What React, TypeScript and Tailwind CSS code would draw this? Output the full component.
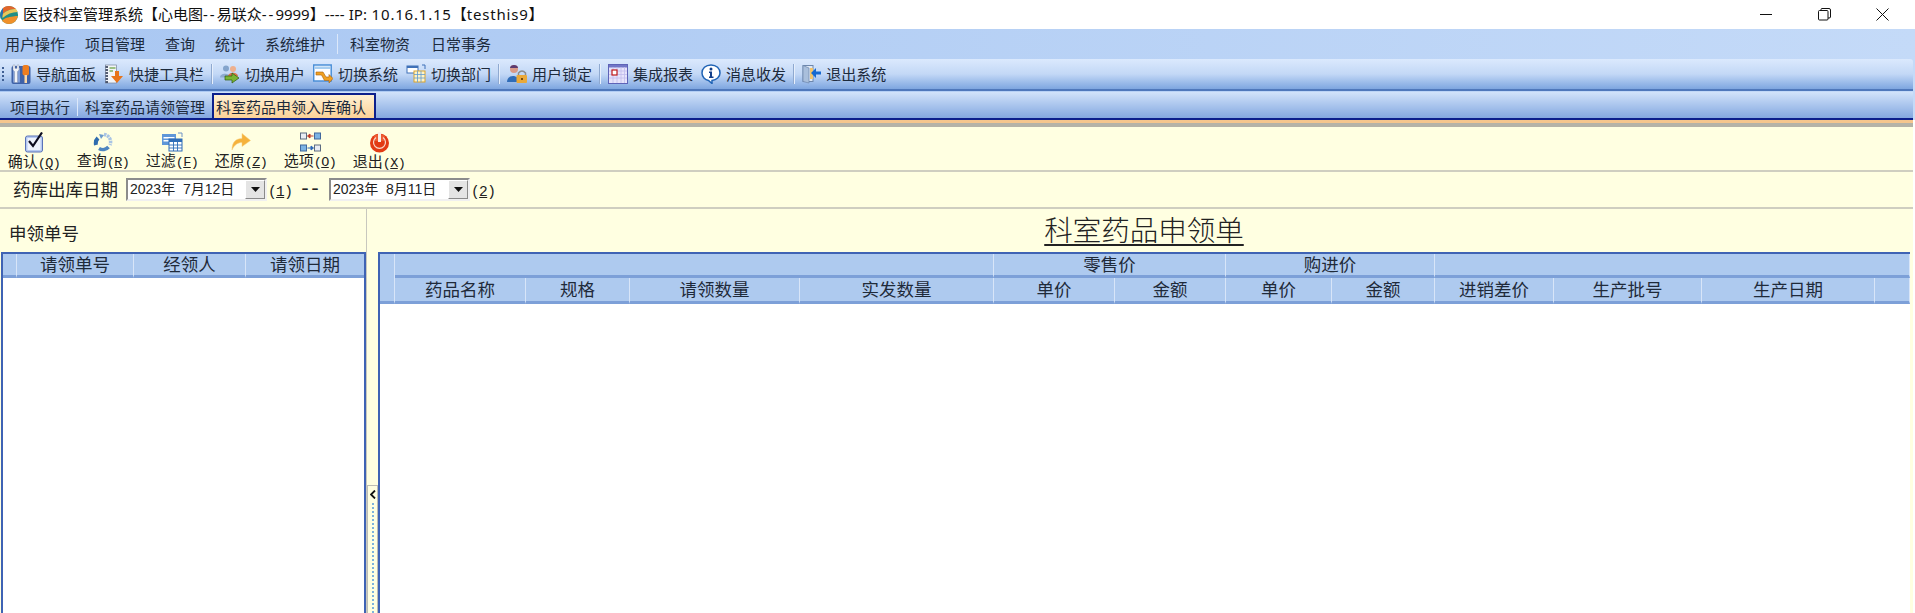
import type { ReactNode } from "react";

const cjk = { fontFamily: '"Noto Sans", "Noto Sans CJK SC", sans-serif' };

function Logo() {
  return (
    <svg width="18" height="20" viewBox="0 0 18 20">
      <circle cx="9" cy="10" r="9" fill="#1f8f86" />
      <path d="M3 3C5.500 .5 12 -.5 16 4C12 4 7 5 3 8.500Z" fill="#e2662a" />
      <path d="M2.500 9C7 5 12 4 16 4C16.800 5 17.300 6 17.600 7C12 7 7 9 2.500 13Z" fill="#e9c75a" />
      <path d="M.4 11C.5 7 1.500 5 3 3L3 8.500L.8 14Z" fill="#2a6fb0" />
      <path d="M2 15.500C6 12 12 11 17.800 11C17 16 13 19 9 19C6 19 3.500 17.500 2 15.500Z" fill="#f0902a" />
      <path d="M2 15.500C6 12 12 10 17.800 9.500L17.800 11C12 11 6 12 2 15.500Z" fill="#1f8f86" />
    </svg>
  );
}

function WindowButtons() {
  return (
    <div className="flex items-center gap-[45px] pr-[26px]">
      <svg width="13" height="13" viewBox="0 0 13 13"><path d="M0 6.500H12" stroke="#111" /></svg>
      <svg width="13" height="13" viewBox="0 0 13 13" fill="none" stroke="#111"><rect x=".5" y="2.500" width="9.500" height="9.500" rx="1" /><path d="M3 2.500V1.500Q3 .5 4 .5H11Q12.500 .5 12.500 2V9Q12.500 10 11 10H10" /></svg>
      <svg width="13" height="13" viewBox="0 0 13 13" stroke="#111"><path d="M.5 .5L12.500 12.500M12.500 .5L.5 12.500" /></svg>
    </div>
  );
}

function NavIcon() {
  return (
    <svg width="20" height="21" viewBox="0 0 20 21">
      <rect x=".5" y="2" width="19" height="18" rx="2" fill="#3f62a8" />
      <rect x="2" y="4" width="7" height="14.500" fill="#7d9bd6" />
      <path d="M2 1H4V4.500H6V1H8V6L6.500 7.500V18.500H3.500V7.500L2 6Z" fill="#f1f3f8" stroke="#77849c" strokeWidth=".4" />
      <rect x="11.500" y="1" width="6.500" height="10.500" rx="2" fill="#ee7d1e" />
      <rect x="13.500" y="11" width="2.500" height="8" fill="#fcd9a8" />
    </svg>
  );
}

function QuickIcon() {
  return (
    <svg width="20" height="20" viewBox="0 0 20 20">
      <rect x="1.500" y="1" width="11" height="18" fill="#f1f4f8" stroke="#76829a" strokeWidth=".7" />
      <path d="M1.500 3H4M1.500 6H4M1.500 9H4M1.500 12H4M1.500 15H4M1.500 18H4" stroke="#1f2b45" strokeWidth="1.500" />
      <path d="M5.500 4H11.500M5.500 7H9" stroke="#7fae5c" strokeWidth="1.500" />
      <path d="M11 7H15V12H19L13 19L7 12H11Z" fill="#e8741a" />
    </svg>
  );
}

function SwitchUserIcon() {
  return (
    <svg width="20" height="20" viewBox="0 0 20 20">
      <circle cx="6" cy="4.500" r="3" fill="#84a4cc" />
      <path d="M0 13.500C0 8.500 10 8.500 10 13.500Z" fill="#8daacf" />
      <circle cx="13" cy="5" r="3" fill="#eeb08e" />
      <path d="M8 12.500C8 7.500 18 7.500 18 12.500Z" fill="#d9764f" />
      <path d="M5 12H12V9L19 14L12 19V16H5Z" fill="#7ab534" stroke="#2f5a10" strokeWidth=".7" />
    </svg>
  );
}

function SwitchSystemIcon() {
  return (
    <svg width="20" height="20" viewBox="0 0 20 20">
      <rect x=".7" y="1" width="17.500" height="16" fill="#fdfdff" stroke="#4a8fd8" strokeWidth="1.500" />
      <rect x="2" y="2.500" width="15" height="2.500" fill="#a6cdf0" />
      <path d="M3 8H10L13 13H16V10.500L20 14.500L16 19V16.500H11.500L8.500 11H3Z" fill="#f0a021" stroke="#a8600c" strokeWidth=".6" />
    </svg>
  );
}

function SwitchDeptIcon() {
  return (
    <svg width="20" height="20" viewBox="0 0 20 20">
      <rect x="1" y="2" width="11" height="7" fill="#fff" stroke="#3f71b8" />
      <rect x="1" y="2" width="11" height="2" fill="#3f71b8" />
      <rect x="8" y="7" width="11" height="11" fill="#fdf3c8" stroke="#d9a32d" />
      <path d="M8 10.500H19M8 14H19M11.500 7V18M15 7V18" stroke="#5f9bd0" strokeWidth=".8" />
      <path d="M16 1H19V5" fill="none" stroke="#3f71b8" />
    </svg>
  );
}

function UserLockIcon() {
  return (
    <svg width="20" height="20" viewBox="0 0 20 20">
      <circle cx="7" cy="5" r="4" fill="#d99a88" />
      <path d="M3 4C3 0 11 0 11 4Z" fill="#5b3a70" />
      <path d="M0 18C0 10 12 10 12 18Z" fill="#2f6cb8" />
      <path d="M11.500 11V9Q15 5 18.500 9V11" fill="none" stroke="#8c8c8c" strokeWidth="1.500" />
      <rect x="9.500" y="11" width="10.500" height="8" rx="1" fill="#eaa93a" />
      <rect x="14" y="14" width="2" height="2" fill="#7a4a0c" />
    </svg>
  );
}

function ReportIcon() {
  return (
    <svg width="20" height="20" viewBox="0 0 20 20">
      <rect x=".5" y=".5" width="19" height="19" fill="#e6e3fb" stroke="#5e63b8" />
      <rect x="1" y="1" width="18" height="2.500" fill="#7176c7" />
      <path d="M1 7H19M1 10.500H19M1 14H19M5 3V19M9 3V19M13 3V19M16.500 3V19" stroke="#c0bdee" strokeWidth=".8" />
      <rect x="4" y="6" width="5" height="5" fill="#fff" stroke="#c01a1a" strokeWidth="1.200" />
    </svg>
  );
}

function InfoIcon() {
  return (
    <svg width="20" height="20" viewBox="0 0 20 20">
      <path d="M10 1C4.500 1 1 4.500 1 9C1 13 4 16 7.500 16.500L11 19.500V16.500C15.500 16 19 13 19 9C19 4.500 15.500 1 10 1Z" fill="#fff" stroke="#1f63b5" strokeWidth="1.500" />
      <circle cx="10" cy="5" r="1.500" fill="#123f8a" />
      <path d="M8 7.500H11V12.500H12.500V14H8V12.500H9V9H8Z" fill="#123f8a" />
    </svg>
  );
}

function ExitSystemIcon() {
  return (
    <svg width="19" height="20" viewBox="0 0 19 20">
      <rect x="1" y="1.500" width="10" height="16" fill="#dfe8f5" stroke="#6d87ad" />
      <path d="M1 1.500L7 4V19L1 17.500Z" fill="#a9bfdc" stroke="#6d87ad" strokeWidth=".7" />
      <rect x="8" y="4" width="3" height="11" fill="#f2c46a" />
      <path d="M19 7.500H14V4L9 9L14 14V10.500H19Z" fill="#1669d0" />
    </svg>
  );
}

function CheckIcon() {
  return (
    <svg width="20" height="21" viewBox="0 0 20 21">
      <rect x="1.500" y="4" width="17" height="16" rx="2" fill="#b7caf0" stroke="#5a73b8" />
      <rect x="3.500" y="6" width="13" height="12" fill="#eef3fd" />
      <path d="M5 9L9 14L18 .5" fill="none" stroke="#0d0d1f" strokeWidth="2.200" />
    </svg>
  );
}

function RefreshIcon() {
  return (
    <svg width="20" height="20" viewBox="0 0 20 20" fill="none">
      <path d="M11 2.500A7.500 7.500 0 0 1 17 13" stroke="#a9c4e4" strokeWidth="3.500" strokeDasharray="2.500 .7" />
      <path d="M15.500 15A7.500 7.500 0 0 1 6 16.500" stroke="#4f86c0" strokeWidth="3.500" />
      <path d="M3 13A7.500 7.500 0 0 1 5 6" stroke="#2f6cae" strokeWidth="4" />
      <path d="M6 2L11 3L8 7Z" fill="#6d9bcc" />
    </svg>
  );
}

function FilterIcon() {
  return (
    <svg width="21" height="20" viewBox="0 0 21 20">
      <rect x="0" y="2" width="14" height="11" fill="#5f97d8" />
      <rect x="1.500" y="5" width="11" height="1.500" fill="#fff" />
      <rect x="1.500" y="8" width="7" height="1.500" fill="#fff" />
      <rect x="7" y="7" width="13" height="12" fill="#fff" stroke="#2f6db8" />
      <rect x="7" y="7" width="13" height="3" fill="#2f6db8" />
      <path d="M7 13H20M7 16H20M11.500 10V19M15.500 10V19" stroke="#2f6db8" strokeWidth=".9" />
      <path d="M16 1H20V5" fill="none" stroke="#6f94c7" />
    </svg>
  );
}

function UndoIcon() {
  return (
    <svg width="20" height="20" viewBox="0 0 20 20">
      <path d="M1 18C1 10 5 6.500 11 6.500V1.500L19.500 8.500L11 14.500V10.500C7 10.500 3.500 12.500 1 18Z" fill="#f5b23c" stroke="#f7cf7a" strokeWidth=".5" />
    </svg>
  );
}

function OptionsIcon() {
  return (
    <svg width="21" height="20" viewBox="0 0 21 20">
      <rect x=".5" y="1" width="6" height="6" fill="#e9edf3" stroke="#5c6b80" />
      <rect x="14.500" y="1" width="6" height="6" fill="#7cb4e4" stroke="#41689c" />
      <rect x=".5" y="13" width="6" height="6" fill="#7cb4e4" stroke="#41689c" />
      <rect x="14.500" y="13" width="6" height="6" fill="#e9edf3" stroke="#5c6b80" />
      <path d="M13.500 4H10V2L7.500 4L10 6V4" fill="#c03a2a" stroke="#c03a2a" />
      <path d="M7.500 16H11V14L13.500 16L11 18V16" fill="#2b66b8" stroke="#2b66b8" />
    </svg>
  );
}

function PowerIcon() {
  return (
    <svg width="21" height="21" viewBox="0 0 21 21">
      <circle cx="10.500" cy="11" r="9.500" fill="#e23a14" />
      <path d="M5 4C8 1.500 13 1.500 16 4L15 9H6Z" fill="#f26a3e" opacity=".7" />
      <path d="M7 5.500A6 6 0 1 0 14 5.500" fill="none" stroke="#f8d8cc" strokeWidth="1.200" />
      <rect x="9" y="0" width="3" height="10" fill="#f8efe8" />
    </svg>
  );
}

const menus = [
  ["用户操作", "项目管理", "查询", "统计", "系统维护"],
  ["科室物资", "日常事务"],
];

function MenuBar() {
  return (
    <div className="flex h-[30px] items-center bg-gradient-to-r from-[#a9c7f2] to-[#c4daf8] pl-[5px] text-[15px] text-[#1c2a3c]">
      <div className="flex gap-[20px]">
        {menus[0].map((m) => <span key={m}>{m}</span>)}
      </div>
      <div className="mx-[12px] h-[20px] w-[1px] bg-[#dce8fa]" />
      <div className="flex gap-[21px]">
        {menus[1].map((m) => <span key={m}>{m}</span>)}
      </div>
    </div>
  );
}

function ToolItem({ icon, label }: { icon: ReactNode; label: string }) {
  return (
    <div className="flex items-center gap-[5px]">
      {icon}
      <span>{label}</span>
    </div>
  );
}

function ToolSep() {
  return <div className="mx-[-1px] h-[20px] w-[2px] border-l border-r border-l-[#8fa9d0] border-r-[#e6effc]" />;
}

function ToolBar() {
  return (
    <div className="mr-[2px] flex h-[32px] items-center gap-[8px] rounded-tr-[3px] border-b-2 border-[#4f78bb] bg-gradient-to-b from-[#dbe9fd] via-[#c3d8f6] to-[#7ea6e0] pl-[2px] text-[15px] text-[#1c2a3c]">
      <div className="mr-[-1px] flex flex-col gap-[2px]">
        <span className="size-[2px] bg-[#3f5f94]" />
        <span className="size-[2px] bg-[#3f5f94]" />
        <span className="size-[2px] bg-[#3f5f94]" />
        <span className="size-[2px] bg-[#3f5f94]" />
      </div>
      <ToolItem icon={<NavIcon />} label="导航面板" />
      <ToolItem icon={<QuickIcon />} label="快捷工具栏" />
      <ToolSep />
      <ToolItem icon={<SwitchUserIcon />} label="切换用户" />
      <ToolItem icon={<SwitchSystemIcon />} label="切换系统" />
      <ToolItem icon={<SwitchDeptIcon />} label="切换部门" />
      <ToolSep />
      <ToolItem icon={<UserLockIcon />} label="用户锁定" />
      <ToolSep />
      <ToolItem icon={<ReportIcon />} label="集成报表" />
      <ToolItem icon={<InfoIcon />} label="消息收发" />
      <ToolSep />
      <ToolItem icon={<ExitSystemIcon />} label="退出系统" />
    </div>
  );
}

function TabStrip() {
  return (
    <div className="mr-[2px] mt-[1px] flex h-[28px] items-end border-b-2 border-[#0c1f8c] bg-gradient-to-b from-[#d2e3fa] to-[#84a8e0] text-[15px] text-[#1c2a3c]">
      <span className="flex h-[22px] items-center pl-[10px]">项目执行</span>
      <div className="mx-[7px] mb-[2px] h-[18px] w-[1px] bg-[#dce8fa]" />
      <span className="flex h-[22px] items-center">科室药品请领管理</span>
      <div className="ml-[7px] flex h-[25px] w-[164px] items-center border-x-2 border-t-2 border-[#0c1f8c] bg-gradient-to-b from-[#fff0d2] to-[#fbd297] pl-[2px] pt-[2px]">
        科室药品申领入库确认
      </div>
    </div>
  );
}

function Hotkey({ children, className = "text-[13.500px]" }: { children: string; className?: string }) {
  return (
    <span className={`tracking-[-0.6px] ${className}`} style={{ fontFamily: '"Liberation Mono", monospace' }}>
      (<span className="underline">{children}</span>)
    </span>
  );
}

const actions: { icon: ReactNode; label: string; key: string }[] = [
  { icon: <CheckIcon />, label: "确认", key: "Q" },
  { icon: <RefreshIcon />, label: "查询", key: "R" },
  { icon: <FilterIcon />, label: "过滤", key: "F" },
  { icon: <UndoIcon />, label: "还原", key: "Z" },
  { icon: <OptionsIcon />, label: "选项", key: "O" },
  { icon: <PowerIcon />, label: "退出", key: "X" },
];

function ActionBar() {
  return (
    <div className="flex h-[45px] gap-[17px] border-b-2 border-[#cfcec0] pl-[8px] pt-[5px] text-[15px] text-[#222]">
      {actions.map((a) => (
        <div key={a.key} className="flex w-[52px] flex-col items-center">
          <div className="flex h-[21px] items-center justify-center">{a.icon}</div>
          <div className="whitespace-nowrap leading-[17px]">
            {a.label}
            <Hotkey>{a.key}</Hotkey>
          </div>
        </div>
      ))}
    </div>
  );
}

function DateBox({ value }: { value: string }) {
  return (
    <div className="flex h-[23px] w-[141px] items-center justify-between border-2 border-b-[#f0f0f0] border-l-[#8c8c8c] border-r-[#f0f0f0] border-t-[#8c8c8c] bg-white pl-[2px] text-[14px] text-[#222]">
      <span className="whitespace-pre" style={{ fontFamily: '"Liberation Sans", "Noto Sans CJK SC", sans-serif' }}>{value}</span>
      <div className="flex h-[19px] w-[20px] items-center justify-center border border-b-[#8a8a8a] border-l-[#fff] border-r-[#8a8a8a] border-t-[#fff] bg-[#e4e4e4]">
        <svg width="9" height="5" viewBox="0 0 9 5"><path d="M0 0H9L4.500 5Z" fill="#111" /></svg>
      </div>
    </div>
  );
}

function DateRow() {
  return (
    <div className="flex h-[37px] items-center border-b-2 border-[#cfcec0] pl-[13px] text-[17.500px] text-[#222]">
      <span className="w-[113px] whitespace-nowrap">药库出库日期</span>
      <DateBox value="2023年  7月12日" />
      <span className="ml-[1px] w-[31px]"><Hotkey className="text-[14.500px]">1</Hotkey></span>
      <span className="w-[30px] text-[20px] tracking-[-2px]" style={{ fontFamily: '"Liberation Mono", monospace' }}>--</span>
      <DateBox value="2023年  8月11日" />
      <span className="ml-[1px]"><Hotkey className="text-[14.500px]">2</Hotkey></span>
    </div>
  );
}

function HeadCell({ children, className = "" }: { children?: ReactNode; className?: string }) {
  return (
    <div className={`flex items-center justify-center border-b-[3px] border-b-[#7da0d8] border-r border-r-[#d8e5f8] bg-[#aecaef] pt-[1px] text-[17.500px] leading-none text-[#1f2a3a] ${className}`}>
      {children}
    </div>
  );
}

function LeftPanel() {
  return (
    <div className="flex h-full w-[366px] flex-col pl-[1px]">
      <div className="flex h-[43px] items-end pb-[6px] pl-[8px] text-[17.500px] text-[#222]">申领单号</div>
      <div className="flex-1 border-x-2 border-t-2 border-[#3f63b4] bg-white">
        <div className="grid h-[24px] grid-cols-[14px_117px_112px_1fr]">
          <HeadCell />
          <HeadCell>请领单号</HeadCell>
          <HeadCell>经领人</HeadCell>
          <HeadCell className="border-r-0">请领日期</HeadCell>
        </div>
      </div>
    </div>
  );
}

function Splitter() {
  return (
    <div className="flex h-full w-[12px] flex-col border-l border-[#c8c8be]">
      <div className="h-[278px]" />
      <div className="flex flex-1 flex-col items-center border-x border-t border-[#bdbdb5] pt-[4px]">
        <svg width="6" height="9" viewBox="0 0 6 9"><path d="M5 .5L1 4.500L5 8.500" fill="none" stroke="#111" strokeWidth="1.800" /></svg>
        <div className="mt-[4px] h-[110px] w-[2px] bg-[repeating-linear-gradient(to_bottom,#7db3dc_0,#7db3dc_2px,transparent_2px,transparent_4px)]" />
      </div>
    </div>
  );
}

const priceHead = [
  { label: "", cls: "col-span-4" },
  { label: "零售价", cls: "col-span-2" },
  { label: "购进价", cls: "col-span-2" },
  { label: "", cls: "col-span-4" },
];

const columns = ["药品名称", "规格", "请领数量", "实发数量", "单价", "金额", "单价", "金额", "进销差价", "生产批号", "生产日期", ""];

function RightPanel() {
  return (
    <div className="flex h-full min-w-0 flex-1 flex-col">
      <div className="flex h-[43px] items-center justify-center pr-[3px]">
        <span className="text-[28.500px] font-light leading-none text-[#222] underline underline-offset-[3px]">科室药品申领单</span>
      </div>
      <div className="mr-[3px] flex-1 border-l-2 border-t-2 border-[#3f63b4] bg-white">
        <div className="grid h-[50px] grid-cols-[15px_131px_104px_170px_194px_121px_111px_106px_103px_119px_148px_173px_1fr] grid-rows-[24px_26px]">
          <HeadCell className="row-span-2" />
          {priceHead.map((h, i) => (
            <HeadCell key={i} className={h.cls}>{h.label}</HeadCell>
          ))}
          {columns.map((c, i) => (
            <HeadCell key={i}>{c}</HeadCell>
          ))}
        </div>
      </div>
    </div>
  );
}

export default function App() {
  return (
    <div className="flex h-[613px] w-[1915px] flex-col overflow-hidden bg-white" style={cjk}>
      <div className="flex h-[29px] shrink-0 items-center justify-between">
        <div className="flex items-center gap-[5px] text-[15px] text-[#111]">
          <Logo />
          <span className="whitespace-pre">
            医技科室管理系统【心电图<span className="tracking-[2px]">--</span>易联众<span className="tracking-[2px]">--</span>9999】<span className="tracking-[0.2px]">----</span> IP:<span className="tracking-[0.8px]"> 10.16.1.15</span>【<span className="tracking-[0.8px]">testhis9</span>】
          </span>
        </div>
        <WindowButtons />
      </div>
      <div className="bg-gradient-to-r from-[#a9c7f2] to-[#c4daf8]">
        <MenuBar />
        <ToolBar />
        <TabStrip />
      </div>
      <div className="mr-[2px] h-[3px] shrink-0 bg-[#f5c68e]" />
      <div className="mr-[2px] h-[4px] shrink-0 bg-[#b5b3a8]" />
      <div className="mr-[2px] flex min-h-0 flex-1 flex-col bg-[#ffffe1]">
        <ActionBar />
        <DateRow />
        <div className="flex min-h-0 flex-1">
          <LeftPanel />
          <Splitter />
          <RightPanel />
        </div>
      </div>
    </div>
  );
}
